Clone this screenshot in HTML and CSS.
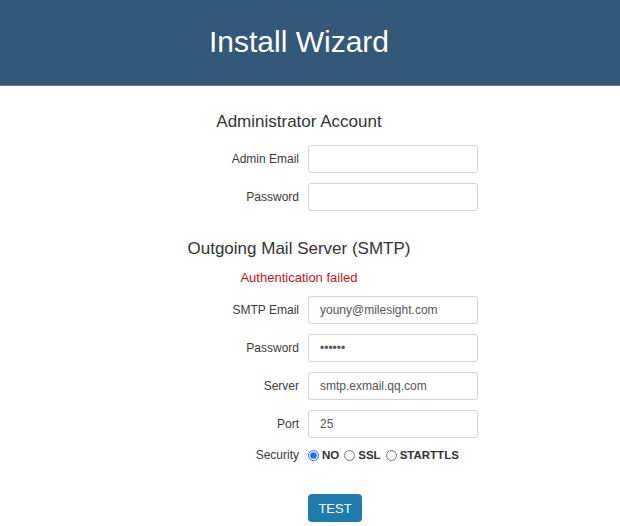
FILE: index.html
```html
<!DOCTYPE html>
<html lang="en">
<head>
    <meta charset="UTF-8">
    <meta name="viewport" content="width=device-width, initial-scale=1.0">
    <title>Install Wizard</title>
    <link rel="stylesheet" href="styles.css">
</head>
<body>
    <!-- Top banner -->
    <header class="banner">
        <h1>Install Wizard</h1>
    </header>

    <form class="wizard">
        <!-- Administrator account -->
        <h2 class="section-title first">Administrator Account</h2>
        <div class="row">
            <label for="admin-email">Admin Email</label>
            <input type="text" id="admin-email">
        </div>
        <div class="row">
            <label for="admin-pass">Password</label>
            <input type="password" id="admin-pass">
        </div>

        <!-- SMTP settings -->
        <h2 class="section-title">Outgoing Mail Server (SMTP)</h2>
        <p class="error">Authentication failed</p>
        <div class="row">
            <label for="smtp-email">SMTP Email</label>
            <input type="text" id="smtp-email" value="youny@milesight.com">
        </div>
        <div class="row">
            <label for="smtp-pass">Password</label>
            <input type="password" id="smtp-pass" value="123456">
        </div>
        <div class="row">
            <label for="smtp-server">Server</label>
            <input type="text" id="smtp-server" value="smtp.exmail.qq.com">
        </div>
        <div class="row">
            <label for="smtp-port">Port</label>
            <input type="text" id="smtp-port" value="25">
        </div>
        <div class="row security">
            <label>Security</label>
            <div class="choices">
                <input type="radio" name="security" id="sec-no" checked><label for="sec-no">NO</label>
                <input type="radio" name="security" id="sec-ssl"><label for="sec-ssl">SSL</label>
                <input type="radio" name="security" id="sec-tls"><label for="sec-tls">STARTTLS</label>
            </div>
        </div>

        <div class="row actions">
            <span></span>
            <button type="button" class="btn">TEST</button>
        </div>
    </form>
</body>
</html>
```

FILE: styles.css
```css
/* Page base */
body {
    margin: 0;
    font-family: 'Liberation Sans', Arial, sans-serif;
    color: #333;
    background: #fff;
}

/* Header banner */
.banner {
    height: 85px;
    background: #33587a;
    border-bottom: 1px solid #5d7c92;
    display: flex;
    justify-content: center;
    align-items: center;
}

.banner h1 {
    margin: 0 0 2px -22px;
    font-size: 30px;
    font-weight: normal;
    color: #fff;
}

/* Form column, centred on the label/input split */
.wizard {
    width: 598px;
}

.section-title {
    margin: 28px 0 13px;
    font-size: 17px;
    line-height: 20px;
    font-weight: normal;
    text-align: center;
    color: #333;
}

.section-title.first {
    margin-top: 26px;
}

.error {
    margin: -2px 0 10px;
    font-size: 13px;
    line-height: 16px;
    color: #d0101e;
    text-align: center;
}

/* Label + field rows */
.row {
    display: grid;
    grid-template-columns: 299px 1fr;
    column-gap: 9px;
    align-items: center;
    margin-bottom: 10px;
}

.row > label {
    text-align: right;
    font-size: 12px;
    color: #3a3a3a;
}

.row input[type="text"],
.row input[type="password"] {
    box-sizing: border-box;
    width: 170px;
    height: 28px;
    margin: 0;
    padding: 0 11px;
    border: 1px solid #d4d4d4;
    border-radius: 3px;
    font-family: 'Liberation Sans', Arial, sans-serif;
    font-size: 12px;
    color: #555;
}

/* Security radios */
.security {
    margin-top: 10px;
    margin-bottom: 0;
}

.choices {
    display: flex;
    align-items: center;
}

.choices input[type="radio"] {
    width: 11px;
    height: 11px;
    margin: 0 3px 0 5px;
    accent-color: #1a73e8;
}

.choices input[type="radio"]:first-child {
    margin-left: 0;
}

.choices label {
    font-size: 11.5px;
    font-weight: bold;
    color: #333;
}

/* Test button */
.actions {
    margin-top: 32px;
}

.btn {
    width: 54px;
    height: 28px;
    padding: 0;
    border: none;
    border-radius: 4px;
    background: #1f7aae;
    color: #fff;
    font-family: 'Liberation Sans', Arial, sans-serif;
    font-size: 13px;
}
```
